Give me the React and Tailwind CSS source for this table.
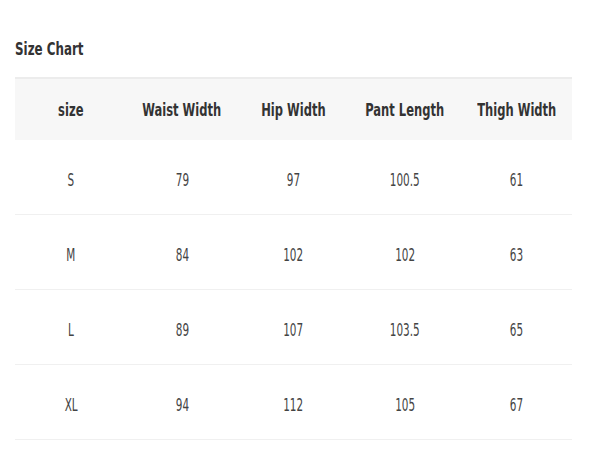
export default function App() {
  const cols = ["size", "Waist Width", "Hip Width", "Pant Length", "Thigh Width"];
  const rows = [
    ["S", "79", "97", "100.5", "61"],
    ["M", "84", "102", "102", "63"],
    ["L", "89", "107", "103.5", "65"],
    ["XL", "94", "112", "105", "67"],
  ];
  return (
    <div className="w-[600px] h-[450px] bg-white overflow-hidden pl-[15px] pr-[28px] pt-[37px] [font-family:'DejaVu_Sans',sans-serif]">
      <div className="h-[40px] text-[18px] leading-[24px] font-bold text-[#333]">
        <span className="inline-block origin-left scale-x-[0.66] whitespace-nowrap">Size Chart</span>
      </div>
      <div className="border-t-2 border-[#ececec]">
        <div className="grid grid-cols-5 h-[61px] bg-[#f7f7f7] items-center text-[18px] font-bold text-[#333]">
          {cols.map((c) => (
            <div key={c} className="flex justify-center whitespace-nowrap">
              <span className="inline-block shrink-0 scale-x-[0.64]">{c}</span>
            </div>
          ))}
        </div>
        {rows.map((r, i) => (
          <div key={i} className="grid grid-cols-5 h-[75px] border-b border-[#f0f0f0] items-center text-[18px] text-[#444] pt-[4px]">
            {r.map((v, j) => (
              <div key={j} className="flex justify-center">
                <span className="inline-block scale-x-[0.58]">{v}</span>
              </div>
            ))}
          </div>
        ))}
      </div>
    </div>
  );
}
